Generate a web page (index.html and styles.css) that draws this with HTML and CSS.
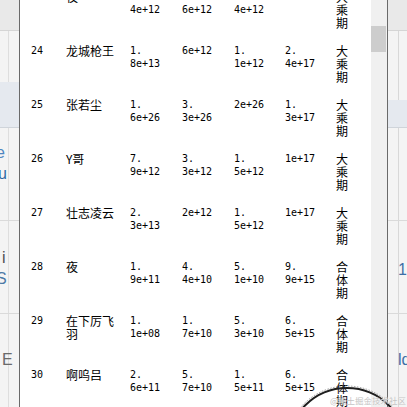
FILE: index.html
```html
<!DOCTYPE html>
<html lang="zh">
<head>
<meta charset="utf-8">
<title>修仙榜</title>
<link rel="stylesheet" href="styles.css">
</head>
<body>
<div class="screen">
  <div class="page page-left">
    <div class="band band-head"></div>
    <div class="band band-a"></div>
    <div class="band band-hl"></div>
    <div class="band band-b"><span class="frag frag-e">e</span><span class="frag frag-u">u</span></div>
    <div class="band band-c"><span class="frag frag-i">i</span><span class="frag frag-s">S</span></div>
    <div class="band band-d"><span class="frag frag-E">E</span></div>
  </div>

  <div class="window">
    <div class="viewport">
      <div class="list">
        <div class="row">
          <div class="num">23</div><div class="cjk name">夜</div>
          <div class="num">1.<br>4e+12</div><div class="num">1.<br>6e+12</div><div class="num">1.<br>4e+12</div><div class="num">1e+17</div>
          <div class="cjk realm">大乘期</div>
        </div>
        <div class="row">
          <div class="num">24</div><div class="cjk name">龙城枪王</div>
          <div class="num">1.<br>8e+13</div><div class="num">6e+12</div><div class="num">1.<br>1e+12</div><div class="num">2.<br>4e+17</div>
          <div class="cjk realm">大乘期</div>
        </div>
        <div class="row">
          <div class="num">25</div><div class="cjk name">张若尘</div>
          <div class="num">1.<br>6e+26</div><div class="num">3.<br>3e+26</div><div class="num">2e+26</div><div class="num">1.<br>3e+17</div>
          <div class="cjk realm">大乘期</div>
        </div>
        <div class="row">
          <div class="num">26</div><div class="cjk name">Y哥</div>
          <div class="num">7.<br>9e+12</div><div class="num">3.<br>3e+12</div><div class="num">1.<br>5e+12</div><div class="num">1e+17</div>
          <div class="cjk realm">大乘期</div>
        </div>
        <div class="row">
          <div class="num">27</div><div class="cjk name">壮志凌云</div>
          <div class="num">2.<br>3e+13</div><div class="num">2e+12</div><div class="num">1.<br>5e+12</div><div class="num">1e+17</div>
          <div class="cjk realm">大乘期</div>
        </div>
        <div class="row">
          <div class="num">28</div><div class="cjk name">夜</div>
          <div class="num">1.<br>9e+11</div><div class="num">4.<br>4e+10</div><div class="num">5.<br>1e+10</div><div class="num">9.<br>9e+15</div>
          <div class="cjk realm">合体期</div>
        </div>
        <div class="row">
          <div class="num">29</div><div class="cjk name">在下厉飞羽</div>
          <div class="num">1.<br>1e+08</div><div class="num">1.<br>7e+10</div><div class="num">5.<br>3e+10</div><div class="num">6.<br>5e+15</div>
          <div class="cjk realm">合体期</div>
        </div>
        <div class="row">
          <div class="num">30</div><div class="cjk name">啊呜吕</div>
          <div class="num">2.<br>6e+11</div><div class="num">5.<br>7e+10</div><div class="num">1.<br>5e+11</div><div class="num">6.<br>5e+15</div>
          <div class="cjk realm">合体期</div>
        </div>
      </div>
    </div>
    <div class="scrollbar"><div class="thumb"></div></div>
  </div>

  <div class="page page-right">
    <div class="band band-head"></div>
    <div class="band band-a2"></div>
    <div class="band band-hl2"></div>
    <div class="band band-b"></div>
    <div class="band band-c"><span class="frag frag-9">19</span></div>
    <div class="band band-d"><span class="frag frag-d">ld</span></div>
  </div>

  <div class="watermark">
    <svg class="wm-ring" width="110" height="30" viewBox="0 0 110 30">
      <circle cx="47" cy="63" r="61" fill="none" stroke="#9a9a9a" stroke-width="1" stroke-dasharray="1.5 1.5"/>
      <circle cx="47" cy="63" r="59" fill="none" stroke="#1e1e1e" stroke-width="2"/>
    </svg>
    <span class="wm-text">@稀土掘金技术社区</span>
  </div>
</div>
</body>
</html>
```

FILE: styles.css
```css
html, body {
  margin: 0;
  padding: 0;
  width: 407px;
  height: 407px;
  overflow: hidden;
  background: #f3f3f3;
}

.screen {
  position: relative;
  display: flex;
  width: 407px;
  height: 407px;
  overflow: hidden;
}

/* ---------- background page strips ---------- */
.page {
  flex: none;
  width: 19px;
  height: 407px;
  display: flex;
  flex-direction: column;
  overflow: hidden;
  background-color: #f4f4f4;
  font-family: "Liberation Sans", Arial, sans-serif;
}
.page-left {
  background-image: linear-gradient(to right, transparent 8px, #dedede 8px, #dedede 9px, transparent 9px);
}
.page-right {
  background-image: linear-gradient(to right, transparent 10px, #d8d8d8 10px, #d8d8d8 11px, transparent 11px);
}

.band {
  flex: none;
  box-sizing: border-box;
  display: flex;
  flex-direction: column;
}
.band-head { height: 31px; background: #e9e9e9; border-bottom: 1px solid #d5d5d5; }
.band-a    { height: 51px; }
.band-hl   { height: 46px; background: #e5e9ef; border-bottom: 1px solid #cfd4da; }
.band-a2   { height: 69px; }
.band-hl2  { height: 28px; background: #e5e9ef; border-bottom: 1px solid #cfd4da; }
.band-b    { height: 93px; border-bottom: 1px solid #dadada; }
.band-c    { height: 93px; border-bottom: 1px solid #dadada; }
.band-d    { flex: 1; }

.frag {
  display: block;
  white-space: nowrap;
  font-size: 16px;
  line-height: 20px;
}
.frag-e { margin-top: 15px; margin-left: -4px; color: #4f86bf; }
.frag-u { margin-top: 1px; margin-left: -2px; color: #2f6aa3; }
.frag-i { margin-top: 27px; margin-left: 2px; color: #505050; }
.frag-s { margin-top: 1px; margin-left: -4px; color: #4d79a6; }
.frag-E { margin-top: 36px; margin-left: 2px; color: #6a6a6a; }
.frag-9 { margin-top: 39px; margin-left: 10px; color: #3d6fa6; }
.frag-d { margin-top: 36px; margin-left: 10px; color: #3d6fa6; }

/* ---------- dialog window ---------- */
.window {
  flex: none;
  display: flex;
  width: 367px;
  height: 407px;
  border-left: 1px solid #6a6a6a;
  border-right: 1px solid #6a6a6a;
}

.viewport {
  flex: none;
  width: 351px;
  height: 407px;
  box-sizing: border-box;
  padding-left: 11px;
  background: #ffffff;
  overflow: hidden;
}

.list {
  margin-top: -10px;
}

.row {
  display: grid;
  grid-template-columns: 35px 64px 52px 52px 51px 51px 13px;
  align-items: start;
  height: 54px;
  line-height: 13px;
  color: #000;
}

.num {
  font-family: "DejaVu Sans Mono", "Liberation Mono", monospace;
  font-size: 10px;
  white-space: nowrap;
}

.cjk {
  font-family: "Noto Sans CJK SC", "Noto Sans", sans-serif;
  font-size: 12px;
}

.name {
  width: 52px;
}

.realm {
  width: 13px;
  word-break: break-all;
}

.scrollbar {
  flex: none;
  width: 16px;
  height: 407px;
  background: #f0f0f0;
}
.thumb {
  width: 15px;
  height: 26px;
  margin-top: 26px;
  background: #cdcdcd;
}

/* ---------- watermark overlay ---------- */
.watermark {
  position: absolute;
  left: 300px;
  top: 384px;
  width: 107px;
  height: 23px;
}
.wm-ring {
  position: absolute;
  left: 0;
  top: 0;
}
.wm-text {
  position: absolute;
  left: 30px;
  top: 11px;
  font-family: "Noto Sans CJK SC", sans-serif;
  font-size: 8.5px;
  line-height: 11px;
  white-space: nowrap;
  color: #c4c4c4;
  text-shadow: 0 0 1px #ffffff;
}
```
